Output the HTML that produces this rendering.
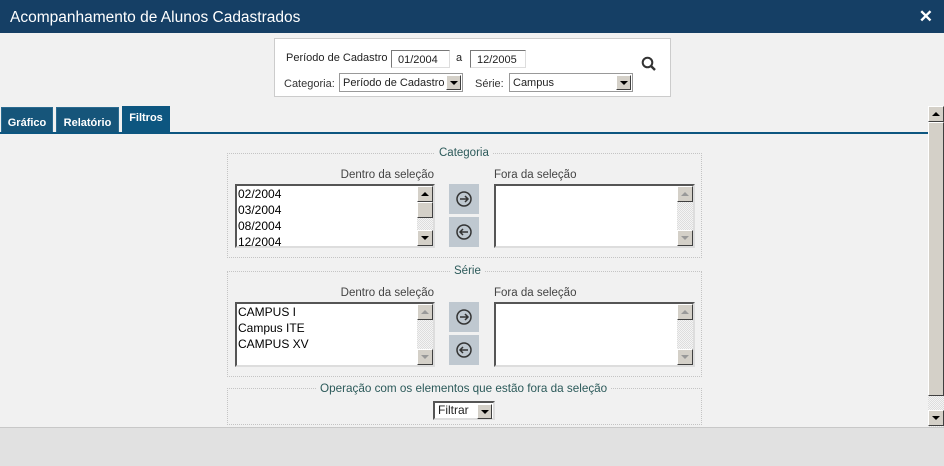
<!DOCTYPE html>
<html><head><meta charset="utf-8"><style>
*{box-sizing:border-box;margin:0;padding:0}
body{width:944px;height:466px;overflow:hidden;background:#f1f1f1;font-family:"Liberation Sans",sans-serif;font-size:12px;color:#222;position:relative}
.a{position:absolute}
.hdr{left:0;top:0;width:944px;height:33px;background:#153f65;color:#fff;font-size:15.5px;line-height:35px;padding-left:10px}
.inp{background:#fff;border:1px solid #777;border-right-color:#ddd;border-bottom-color:#ddd;font-size:11px;line-height:18px;padding-left:6px;height:18px}
.sel{background:#fff;border:1px solid #999;font-size:11px;line-height:19px;padding-left:3px;height:19px}
.dd{position:absolute;right:1px;top:1px;width:15px;height:15px;background:#d4d0c8;border:1px solid;border-color:#fff #404040 #404040 #fff}
.dd:after{content:"";position:absolute;left:3px;top:5px;border:4px solid transparent;border-top:4px solid #000;border-bottom:0}
.tab{top:107px;height:26px;background:#16557a;color:#fff;font-weight:bold;font-size:11px;line-height:30px;text-align:center;border:1px solid #2a6b90}
.fs{border:1px dotted #c4c4c4}
.leg{background:#f1f1f1;color:#2c5a5a;font-size:11.5px;padding:0 4px}
.lbl{color:#444;font-size:11.5px}
.list{background:#fff;border:2px solid;border-color:#555 #ddd #ddd #555;font-size:12px;line-height:16px;color:#000;padding-left:1px;overflow:hidden}
.sb{position:absolute;right:0;top:0;bottom:0;width:16px;background:repeating-conic-gradient(#ddd 0 25%,#f4f4f4 0 50%) 0 0/2px 2px}
.bt{position:absolute;left:0;width:16px;height:16px;background:#d4d0c8;border:1px solid;border-color:#fff #404040 #404040 #fff}
.up:after,.dn:after{content:"";position:absolute;left:3px;top:5px;border:4px solid transparent}
.up:after{border-bottom:4px solid #000;border-top:0}
.dn:after{border-top:4px solid #000;border-bottom:0}
.dis:after{border-bottom-color:#999;border-top-color:#999}
.arr{background:#bfc8d0;width:30px;height:30px}
</style></head><body>
<div class="a hdr">Acompanhamento de Alunos Cadastrados<span style="position:absolute;right:11px;top:-1px;font-weight:bold;font-size:17px">✕</span></div>

<div class="a" style="left:274px;top:38px;width:397px;height:59px;background:#fff;border:1px solid #ccc"></div>
<div class="a" style="left:286px;top:52px;font-size:11px">Período de Cadastro</div>
<div class="a inp" style="left:391px;top:50px;width:59px">01/2004</div>
<div class="a" style="left:456px;top:52px;font-size:11px">a</div>
<div class="a inp" style="left:470px;top:50px;width:56px">12/2005</div>
<div class="a" style="left:284px;top:78px;color:#333;font-size:11px">Categoria:</div>
<div class="a sel" style="left:339px;top:73px;width:124px">Período de Cadastro<div class="dd"></div></div>
<div class="a" style="left:475px;top:78px;color:#333;font-size:11px">Série:</div>
<div class="a sel" style="left:509px;top:73px;width:124px">Campus<div class="dd"></div></div>
<svg class="a" style="left:641px;top:56px" width="16" height="16" viewBox="0 0 16 16"><circle cx="6.5" cy="6.5" r="4.8" fill="none" stroke="#333" stroke-width="2"/><path d="M10 10l4 4" stroke="#333" stroke-width="2.4"/></svg>

<div class="a tab" style="left:1px;width:52px">Gráfico</div>
<div class="a tab" style="left:56px;width:63px">Relatório</div>
<div class="a tab" style="left:122px;top:106px;height:28px;width:48px;background:#0d5680;border:0;line-height:24px">Filtros</div>
<div class="a" style="left:0;top:132px;width:928px;height:2px;background:#0d5680"></div>

<div class="a" style="left:928px;top:106px;width:16px;height:321px;background:repeating-conic-gradient(#ddd 0 25%,#f4f4f4 0 50%) 0 0/2px 2px">
<div class="bt up" style="top:0"></div><div class="bt" style="top:16px;height:274px"></div><div class="bt dn" style="top:304px"></div></div>

<!-- Categoria -->
<div class="a fs" style="left:227px;top:153px;width:475px;height:105px"></div>
<div class="a leg" style="left:435px;top:147px">Categoria</div>
<div class="a lbl" style="left:235px;width:199px;text-align:right;top:169px">Dentro da seleção</div>
<div class="a lbl" style="left:494px;top:169px">Fora da seleção</div>
<div class="a list" style="left:235px;top:184px;width:200px;height:64px">02/2004<br>03/2004<br>08/2004<br>12/2004
<div class="sb"><div class="bt up" style="top:0"></div><div class="bt" style="top:16px"></div><div class="bt dn" style="bottom:0"></div></div></div>
<div class="a arr" style="left:449px;top:184px"><svg width="30" height="30"><circle cx="15" cy="15" r="7" fill="none" stroke="#333" stroke-width="1.5"/><path d="M11 15h8M16 12l3 3-3 3" fill="none" stroke="#333" stroke-width="1.5"/></svg></div>
<div class="a arr" style="left:449px;top:217px"><svg width="30" height="30"><circle cx="15" cy="15" r="7" fill="none" stroke="#333" stroke-width="1.5"/><path d="M11 15h8M14 12l-3 3 3 3" fill="none" stroke="#333" stroke-width="1.5"/></svg></div>
<div class="a list" style="left:494px;top:184px;width:201px;height:64px">
<div class="sb"><div class="bt up dis" style="top:0"></div><div class="bt dn dis" style="bottom:0"></div></div></div>

<!-- Série -->
<div class="a fs" style="left:227px;top:271px;width:475px;height:106px"></div>
<div class="a leg" style="left:450px;top:265px">Série</div>
<div class="a lbl" style="left:235px;width:199px;text-align:right;top:287px">Dentro da seleção</div>
<div class="a lbl" style="left:494px;top:287px">Fora da seleção</div>
<div class="a list" style="left:235px;top:302px;width:200px;height:65px">CAMPUS I<br>Campus ITE<br>CAMPUS XV
<div class="sb"><div class="bt up dis" style="top:0"></div><div class="bt dn dis" style="bottom:0"></div></div></div>
<div class="a arr" style="left:449px;top:302px"><svg width="30" height="30"><circle cx="15" cy="15" r="7" fill="none" stroke="#333" stroke-width="1.5"/><path d="M11 15h8M16 12l3 3-3 3" fill="none" stroke="#333" stroke-width="1.5"/></svg></div>
<div class="a arr" style="left:449px;top:335px"><svg width="30" height="30"><circle cx="15" cy="15" r="7" fill="none" stroke="#333" stroke-width="1.5"/><path d="M11 15h8M14 12l-3 3 3 3" fill="none" stroke="#333" stroke-width="1.5"/></svg></div>
<div class="a list" style="left:494px;top:302px;width:201px;height:65px">
<div class="sb"><div class="bt up dis" style="top:0"></div><div class="bt dn dis" style="bottom:0"></div></div></div>

<!-- Operação -->
<div class="a fs" style="left:227px;top:388px;width:475px;height:37px"></div>
<div class="a leg" style="left:316px;top:382px;font-size:11.7px">Operação com os elementos que estão fora da seleção</div>
<div class="a sel" style="left:433px;top:401px;width:62px;border:2px solid;border-color:#555 #ddd #ddd #555;font-size:12px;line-height:15px">Filtrar<div class="dd"></div></div>

<div class="a" style="left:0;top:427px;width:944px;height:39px;background:#e1e1e1;border-top:1px solid #c8c8c8"></div>
</body></html>
